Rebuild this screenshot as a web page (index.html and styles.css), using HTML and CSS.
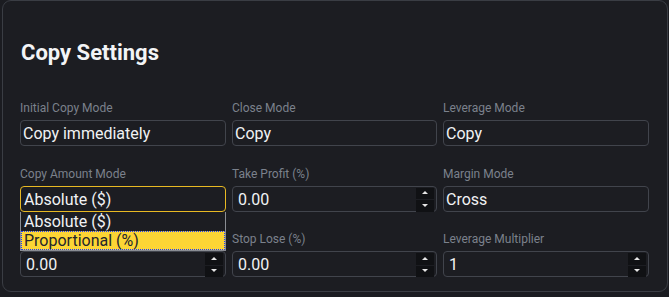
FILE: index.html
```html
<!DOCTYPE html>
<html lang="en">
<head>
<meta charset="utf-8">
<title>Copy Settings</title>
<link rel="stylesheet" href="styles.css">
</head>
<body>
<section class="card">
  <h2 class="title">Copy Settings</h2>
  <div class="grid">
    <div class="field">
      <label class="label">Initial Copy Mode</label>
      <div class="box"><span class="val">Copy immediately</span></div>
    </div>
    <div class="field">
      <label class="label">Close Mode</label>
      <div class="box"><span class="val">Copy</span></div>
    </div>
    <div class="field">
      <label class="label">Leverage Mode</label>
      <div class="box"><span class="val">Copy</span></div>
    </div>

    <div class="field select-field">
      <label class="label">Copy Amount Mode</label>
      <div class="box focus"><span class="val">Absolute ($)</span></div>
      <ul class="menu">
        <li class="opt">Absolute ($)</li>
        <li class="opt sel">Proportional (%)</li>
      </ul>
    </div>
    <div class="field">
      <label class="label">Take Profit (%)</label>
      <div class="box num"><span class="val">0.00</span>
        <span class="spin"><span class="up"></span><span class="dn"></span></span></div>
    </div>
    <div class="field">
      <label class="label">Margin Mode</label>
      <div class="box"><span class="val">Cross</span></div>
    </div>

    <div class="field">
      <span class="label"></span>
      <div class="box num"><span class="val">0.00</span>
        <span class="spin"><span class="up"></span><span class="dn"></span></span></div>
    </div>
    <div class="field">
      <label class="label">Stop Lose (%)</label>
      <div class="box num"><span class="val">0.00</span>
        <span class="spin"><span class="up"></span><span class="dn"></span></span></div>
    </div>
    <div class="field">
      <label class="label">Leverage Multiplier</label>
      <div class="box num"><span class="val">1</span>
        <span class="spin"><span class="up"></span><span class="dn"></span></span></div>
    </div>
  </div>
</section>
</body>
</html>
```
FILE: styles.css
```css
* { box-sizing: border-box; }
html, body { margin: 0; padding: 0; }
body {
  background: #1b1c21;
  width: 669px;
  height: 297px;
  overflow: hidden;
  font-family: Roboto, "Liberation Sans", sans-serif;
  color: #eaecef;
}
.card {
  margin: 0 0 0 2px;
  width: 666px;
  height: 292px;
  border: 1px solid #3a3d44;
  border-radius: 9px;
  background: #1c1d22;
  padding: 39px 17px 0 17px;
}
.title {
  margin: 0;
  font-size: 22px;
  line-height: 26px;
  font-weight: 700;
  color: #f3f4f6;
  padding-left: 1px;
}
.grid {
  margin-top: 35px;
  display: grid;
  grid-template-columns: 206px 205px 206px;
  column-gap: 6px;
  row-gap: 20.5px;
}
.field { display: flex; flex-direction: column; position: relative; }
.label {
  display: block;
  font-size: 12px;
  line-height: 14px;
  height: 14px;
  color: #7b818c;
  margin-bottom: 5px;
}
.box {
  height: 26px;
  border: 1px solid #41444c;
  border-radius: 4px;
  display: flex;
  align-items: center;
  padding: 2px 0 0 2px;
  position: relative;
}
.box.num { padding-left: 5px; }
.box.focus { border-color: #e8b923; padding-left: 3px; }
.val {
  font-size: 16px;
  line-height: 20px;
  color: #f1f2f4;
}
.spin {
  position: absolute;
  right: 2px;
  top: 1px;
  width: 18px;
  height: 24px;
  display: flex;
  flex-direction: column;
  gap: 1px;
}
.spin .up, .spin .dn {
  flex: 1;
  background: #101114;
  position: relative;
}
.spin .up::after, .spin .dn::after {
  content: "";
  position: absolute;
  left: 50%;
  top: 50%;
  margin-left: -3px;
  margin-top: -2px;
  border-left: 3px solid transparent;
  border-right: 3px solid transparent;
}
.spin .up::after { border-bottom: 3px solid #e6e6e6; }
.spin .dn::after { border-top: 3px solid #e6e6e6; }
.menu {
  position: absolute;
  left: 0;
  top: 45px;
  width: 206px;
  margin: 0;
  padding: 0;
  list-style: none;
  border: 1px solid #8a8d93;
  border-top: 0;
  background: #1c1d22;
  z-index: 2;
}
.opt {
  height: 19px;
  line-height: 19px;
  font-size: 16px;
  padding-left: 3px;
  color: #f1f2f4;
}
.opt.sel {
  background: #fcd535;
  color: #23252b;
  outline: 1px dotted #1a3cff;
  outline-offset: -1px;
}
```
